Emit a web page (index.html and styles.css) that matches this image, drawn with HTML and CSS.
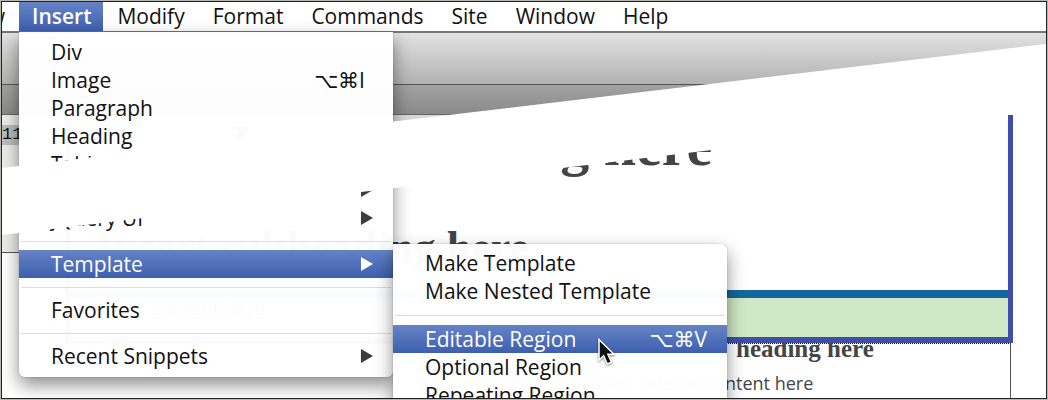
FILE: index.html
```html
<!DOCTYPE html>
<html lang="en">
<head>
<meta charset="utf-8">
<title>Insert menu</title>
<link rel="stylesheet" href="styles.css">
</head>
<body>
<div class="screen">
  <nav class="menubar">
    <div class="entry entry-cut"><button class="top">View</button></div>
    <div class="entry">
      <button class="top top-open">Insert</button>
      <div class="menu">
        <button class="item">Div</button>
        <button class="item">Image <kbd>⌥⌘I</kbd></button>
        <button class="item">Paragraph</button>
        <button class="item">Heading</button>
        <button class="item">Table</button>
        <div class="group">
          <button class="item">jQuery Mobile <i class="arrow"></i></button>
          <button class="item">jQuery UI <i class="arrow"></i></button>
        </div>
        <hr class="rule">
        <div class="parent">
          <button class="item item-active">Template <i class="arrow"></i></button>
          <div class="menu submenu">
            <button class="item">Make Template</button>
            <button class="item">Make Nested Template</button>
            <hr class="rule">
            <button class="item item-active">Editable Region <kbd>⌥⌘V</kbd></button>
            <button class="item">Optional Region</button>
            <button class="item">Repeating Region</button>
            <svg class="cursor" viewBox="0 0 18 28" aria-hidden="true"><path d="M2 1.500V22l4.600-4.200 3.700 8.200 4.200-1.800-3.600-8h6.100z"/></svg>
          </div>
        </div>
        <hr class="rule">
        <button class="item">Favorites</button>
        <hr class="rule">
        <button class="item">Recent Snippets <i class="arrow"></i></button>
      </div>
    </div>
    <div class="entry"><button class="top">Modify</button></div>
    <div class="entry"><button class="top">Format</button></div>
    <div class="entry"><button class="top">Commands</button></div>
    <div class="entry"><button class="top">Site</button></div>
    <div class="entry"><button class="top">Window</button></div>
    <div class="entry"><button class="top">Help</button></div>
  </nav>
  <div class="toolbar"></div>
  <div class="tabstrip"></div>
  <main class="workspace">
    <aside class="gutter"><span class="line-number">11</span></aside>
    <article class="document">
      <section class="region">
        <h1 class="title">Insert heading here</h1>
        <h2 class="subtitle">Insert subheading here</h2>
        <p class="content">Insert content here</p>
      </section>
      <section class="sidebar">
        <h3 class="side-title">heading here</h3>
        <p class="side-text">Insert sidebar content here</p>
      </section>
    </article>
  </main>
  <div class="tear"></div>
</div>
</body>
</html>
```
FILE: styles.css
```css
* { box-sizing: border-box; }

body {
  margin: 0;
  padding: 1px;
  background: #b4b8b0;
  font-family: "Open Sans", "DejaVu Sans", sans-serif;
  font-size: 21px;
  color: #111;
}

.screen {
  position: relative;
  height: calc(100vh - 2px);
  border: 1px solid #222;
  background: #fff;
  overflow: hidden;
}

button {
  border: 0;
  background: none;
  font: inherit;
  font-weight: 500;
  color: inherit;
  white-space: nowrap;
}

h1, h2, h3, p { margin: 0; white-space: nowrap; }

.menubar {
  display: flex;
  border-bottom: 2px solid #77777a;
}

.entry { position: relative; }

.entry-cut {
  display: flex;
  justify-content: flex-end;
  width: 17px;
  overflow: hidden;
}

.top {
  display: block;
  height: 29px;
  padding: 0 14px;
  line-height: 25px;
}

.top-open, .item-active {
  background: linear-gradient(#6583c6, #3d5fae);
  color: #fff;
}

.top-open { font-weight: 600; padding: 0 12px 0 13px; }

.menu {
  position: absolute;
  z-index: 2;
  top: 30px;
  left: 0;
  width: 374px;
  padding: 6px 0 7px;
  border-radius: 0 0 6px 6px;
  background: rgba(255, 255, 255, 0.98);
  box-shadow: 0 8px 18px rgba(0, 0, 0, 0.45), 0 0 1px rgba(0, 0, 0, 0.6);
}

.item {
  display: flex;
  align-items: center;
  justify-content: space-between;
  width: 100%;
  height: 28px;
  padding: 0 20px 0 32px;
  line-height: 28px;
}

.group { margin-top: -2px; }

kbd {
  margin-right: 8px;
  font-family: "Open Sans", "DejaVu Sans", sans-serif;
  font-size: 21px;
}

.rule {
  height: 18px;
  margin: 0 2px;
  border: 0;
  background: linear-gradient(#dcdcdf, #dcdcdf) center / 100% 1px no-repeat;
}

.arrow {
  border-style: solid;
  border-width: 7px 0 7px 12px;
  border-color: transparent transparent transparent #3c3c3c;
}

.item-active .arrow { border-left-color: #fff; }

.parent { position: relative; }

.submenu {
  top: -6px;
  left: 100%;
  width: 334px;
  padding-top: 5px;
  border-radius: 0 6px 6px 6px;
}

.submenu .rule { height: 20px; }

.submenu kbd { margin-right: 0; }

.cursor {
  position: absolute;
  top: 94px;
  left: 204px;
  width: 18px;
  height: 28px;
  fill: #111;
  stroke: #fff;
  stroke-width: 1.5;
  filter: drop-shadow(0 1px 1px rgba(0, 0, 0, 0.5));
}

.toolbar {
  height: 52px;
  border-bottom: 1px solid #555;
  background: linear-gradient(#e2e2e2, #b2b2b2);
}

.tabstrip {
  height: 30px;
  border-bottom: 1px solid #666;
  background: linear-gradient(#a2a2a2, #8a8a8a);
}

.workspace { display: flex; }

.gutter {
  width: 17px;
  height: 138px;
  padding-top: 10px;
  border-bottom: 1px solid #555;
  background: #ececec;
}

.line-number {
  display: block;
  background: #bcbcbc;
  font-family: "Liberation Mono", monospace;
  font-size: 17px;
  line-height: 20px;
}

.document {
  flex: 1;
  min-width: 0;
  padding: 0 33px 0 46px;
  background: linear-gradient(#d8d8d8, #d8d8d8) 0 0 / 50% 8px no-repeat;
  color: #444;
}

.region {
  position: relative;
  border: solid #3f4fa8;
  border-width: 0 5px 6px;
}

.title, .subtitle, .side-title { font-family: "Liberation Serif", serif; font-weight: bold; }

.title {
  padding-left: 160px;
  font-size: 58px;
  line-height: 62px;
}

.subtitle {
  margin-top: 46px;
  padding-left: 27px;
  font-size: 44px;
  line-height: 50px;
}

.content {
  height: 47px;
  margin-top: 17px;
  padding-left: 25px;
  border-top: 8px solid #14679c;
  background: #d0e8c5;
  font-size: 19px;
  line-height: 20px;
}

.sidebar {
  margin: 0 2px;
  padding-left: 518px;
  border-top: 1px dotted #111;
  border-right: 1px solid #555;
}

.side-title {
  padding-left: 151px;
  font-size: 25px;
  line-height: 10px;
}

.side-text {
  padding: 12px 0 24px;
  font-size: 18px;
  line-height: 34px;
}

.tear {
  position: absolute;
  z-index: 3;
  inset: 0;
  background: #fff;
  clip-path: polygon(0 166px, 100% 42px, 100% 113px, 96% 113px, 0 233px);
  pointer-events: none;
}
```
